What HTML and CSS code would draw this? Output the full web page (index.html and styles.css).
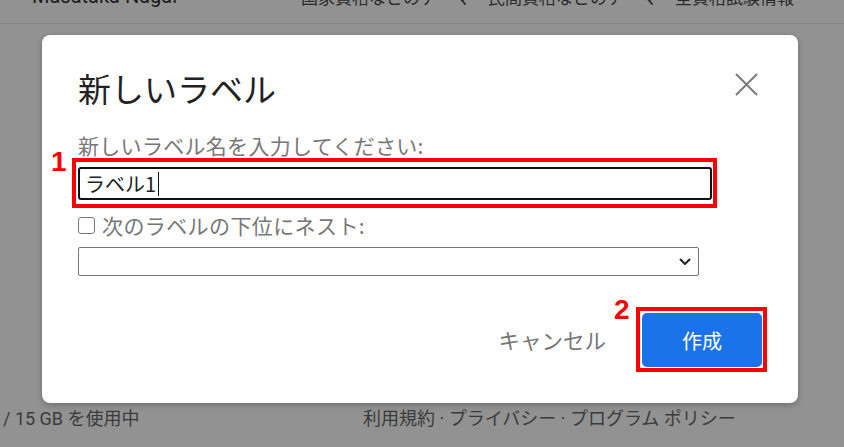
FILE: index.html
```html
<!DOCTYPE html>
<html lang="ja">
<head>
<meta charset="utf-8">
<title>新しいラベル</title>
<link rel="stylesheet" href="styles.css">
</head>
<body>
<div class="page">
  <header class="topbar">
    <span class="top-left">Masataka Nagai</span>
    <span class="top-right">国家資格などのテーマ・民間資格などのテーマ・全資格試験情報</span>
  </header>

  <div class="dialog">
    <div class="title-row">
      <h1 class="title">新しいラベル</h1>
      <button class="close" aria-label="閉じる">
        <svg width="23" height="23" viewBox="0 0 23 23"><path d="M1 1L22 22M22 1L1 22" stroke="#7a7a7a" stroke-width="2" fill="none"/></svg>
      </button>
    </div>

    <div class="label">新しいラベル名を入力してください:</div>
    <div class="field">
      <div class="input">ラベル1<span class="caret"></span></div>
      <span class="mark mark-field"></span>
      <span class="num num-1">1</span>
    </div>

    <div class="nest-row">
      <span class="checkbox"></span>
      <span class="nest-text">次のラベルの下位にネスト:</span>
    </div>

    <div class="select">
      <svg width="12" height="7" viewBox="0 0 12 7"><path d="M1 1L6 6L11 1" stroke="#222" stroke-width="2" fill="none"/></svg>
    </div>

    <div class="actions">
      <span class="cancel">キャンセル</span>
      <div class="create-wrap">
        <button class="create">作成</button>
        <span class="mark mark-btn"></span>
        <span class="num num-2">2</span>
      </div>
    </div>
  </div>

  <footer class="footer">
    <span class="foot-left">/ 15 GB を使用中</span>
    <span class="foot-right">利用規約 · プライバシー · プログラム ポリシー</span>
  </footer>
</div>
</body>
</html>
```

FILE: styles.css
```css
* { box-sizing: border-box; }
html, body {
  margin: 0;
  padding: 0;
}
body {
  background: #929292;
  font-family: "Noto Sans CJK JP", "Noto Sans", sans-serif;
  width: 844px;
  height: 447px;
  overflow: hidden;
}
.page {
  width: 844px;
  height: 447px;
  display: flex;
  flex-direction: column;
}
.topbar {
  height: 24px;
  flex: none;
  border-bottom: 1px solid #868686;
  display: flex;
  overflow: hidden;
  color: #1c1c1c;
  font-size: 20px;
  line-height: 22px;
  white-space: nowrap;
}
.top-left {
  width: 301px;
  flex: none;
  padding-left: 32px;
  margin-top: -15px;
  font-family: "Roboto", "Noto Sans", sans-serif;
}
.top-right {
  margin-top: -14px;
  font-size: 17px;
  color: #2a2a2a;
}
.dialog {
  margin-top: 11px;
  margin-left: 42px;
  width: 756px;
  height: 368px;
  flex: none;
  background: #fff;
  border-radius: 8px;
  box-shadow: 0 2px 6px rgba(0,0,0,0.25);
  padding: 33px 36px 36px 36px;
  display: flex;
  flex-direction: column;
}
.title-row {
  display: flex;
  justify-content: space-between;
  align-items: flex-start;
  height: 40px;
}
.title {
  margin: 0;
  font-size: 33px;
  line-height: 40px;
  font-weight: 400;
  color: #222;
}
.close {
  margin: 5px 4px 0 0;
  padding: 0;
  border: 0;
  background: none;
  width: 23px;
  height: 23px;
  display: block;
}
.close svg { display: block; }
.label {
  margin-top: 25px;
  font-size: 21px;
  line-height: 24px;
  letter-spacing: 0.3px;
  color: #777;
}
.field {
  margin-top: 10px;
  position: relative;
  width: 634px;
  height: 33px;
}
.input {
  width: 634px;
  height: 33px;
  border: 2px solid #111;
  border-radius: 3px;
  padding-left: 5px;
  font-size: 20px;
  line-height: 29px;
  color: #222;
  display: flex;
  align-items: center;
}
.caret {
  display: inline-block;
  width: 1px;
  height: 24px;
  background: #111;
  margin-left: 2px;
}
.mark {
  position: absolute;
  border: 4px solid #ff0000;
  pointer-events: none;
}
.mark-field {
  left: -6px;
  right: -5px;
  top: -9px;
  bottom: -8px;
}
.num {
  position: absolute;
  font-family: "Liberation Sans", Arial, sans-serif;
  font-weight: 700;
  font-size: 28px;
  line-height: 28px;
  color: #ff0000;
}
.num-1 {
  left: -27px;
  top: -19px;
}
.nest-row {
  margin-top: 13px;
  display: flex;
  align-items: center;
  height: 24px;
}
.checkbox {
  width: 17px;
  height: 17px;
  border: 1px solid #777;
  border-radius: 3px;
  margin-right: 7px;
  flex: none;
}
.nest-text {
  font-size: 21px;
  line-height: 24px;
  letter-spacing: 0.4px;
  color: #777;
}
.select {
  margin-top: 10px;
  width: 621px;
  height: 29px;
  border: 1px solid #767676;
  border-radius: 2px;
  display: flex;
  align-items: center;
  justify-content: flex-end;
  padding-right: 7px;
}
.select svg { display: block; }
.actions {
  margin-top: 37px;
  display: flex;
  justify-content: flex-end;
  align-items: center;
}
.cancel {
  font-size: 21.5px;
  line-height: 28px;
  color: #777;
  margin-right: 36px;
}
.create-wrap {
  position: relative;
  width: 120px;
  height: 54px;
}
.create {
  width: 120px;
  height: 54px;
  border: 0;
  border-radius: 5px;
  background: #1a73e8;
  color: #fff;
  font-family: "Noto Sans CJK JP", "Noto Sans", sans-serif;
  font-size: 20px;
  padding: 0;
}
.mark-btn {
  left: -6px;
  right: -5px;
  top: -6px;
  bottom: -5px;
}
.num-2 {
  left: -28px;
  top: -17px;
}
.footer {
  margin-top: 5px;
  display: flex;
  font-family: "Roboto", "Noto Sans CJK JP", sans-serif;
  font-size: 18px;
  line-height: 22px;
  color: #3a3a3a;
  white-space: nowrap;
}
.foot-left {
  width: 363px;
  flex: none;
  padding-left: 3px;
}
```
